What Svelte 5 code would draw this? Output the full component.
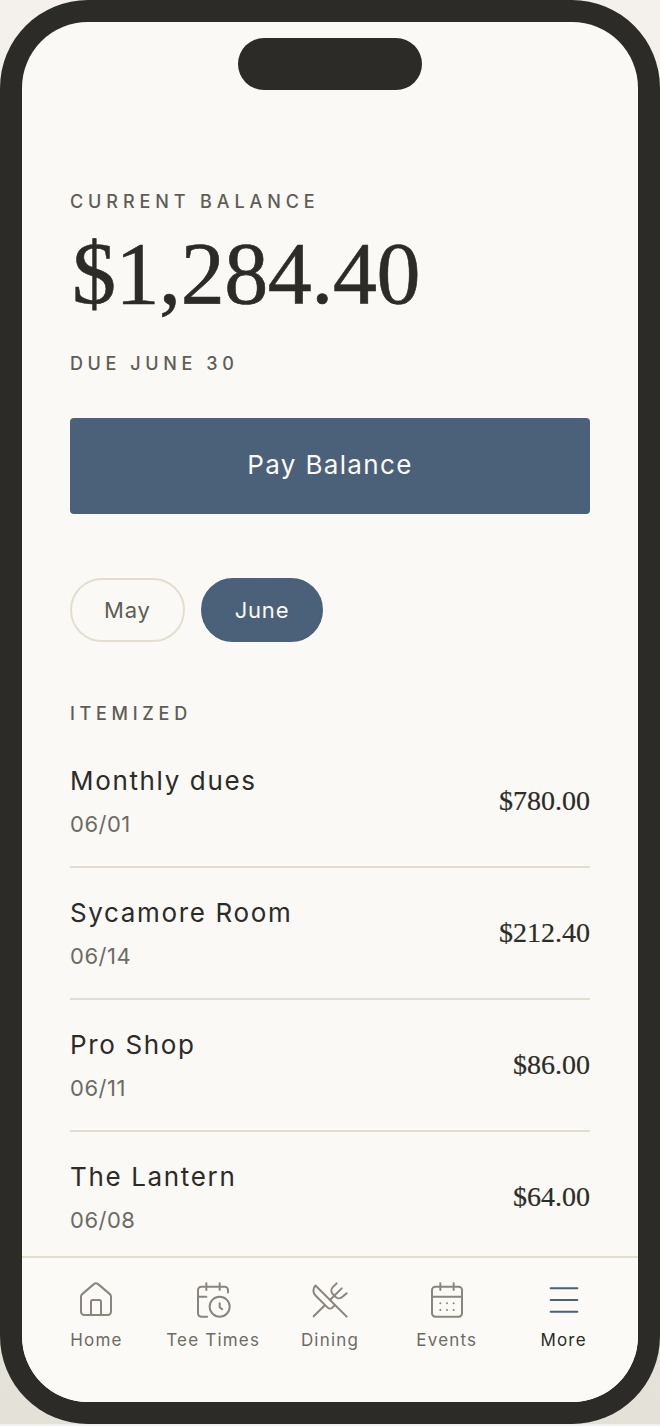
<script>
  const items = [
    { name: "Monthly dues", date: "06/01", amount: "$780.00" },
    { name: "Sycamore Room", date: "06/14", amount: "$212.40" },
    { name: "Pro Shop", date: "06/11", amount: "$86.00" },
    { name: "The Lantern", date: "06/08", amount: "$64.00" },
  ];
  const tabs = ["Home", "Tee Times", "Dining", "Events", "More"];
</script>

<div class="phone">
  <div class="screen">
    <div class="notch"></div>
    <main class="content">
      <div class="label">CURRENT BALANCE</div>
      <div class="balance">$1,284.40</div>
      <div class="due">DUE JUNE 30</div>
      <button class="pay">Pay Balance</button>
      <div class="months">
        <button class="pill">May</button>
        <button class="pill active">June</button>
      </div>
      <div class="itemized">ITEMIZED</div>
      <ul class="list">
        {#each items as item}
          <li class="row">
            <div>
              <div class="name">{item.name}</div>
              <div class="date">{item.date}</div>
            </div>
            <div class="amount">{item.amount}</div>
          </li>
        {/each}
      </ul>
    </main>
    <nav class="tabs">
      {#each tabs as tab, i}
        <div class="tab" class:current={tab === "More"}>
          <svg width="40" height="40" viewBox="0 0 24 24" fill="none" stroke="currentColor" stroke-width="1.2" stroke-linecap="round" stroke-linejoin="round">
            {#if i === 0}
              <path d="M15 21v-8a1 1 0 0 0-1-1h-4a1 1 0 0 0-1 1v8"/>
              <path d="M3 10a2 2 0 0 1 .709-1.528l7-5.999a2 2 0 0 1 2.582 0l7 5.999A2 2 0 0 1 21 10v9a2 2 0 0 1-2 2H5a2 2 0 0 1-2-2z"/>
            {:else if i === 1}
              <path d="M21 7.5V6a2 2 0 0 0-2-2H5a2 2 0 0 0-2 2v14a2 2 0 0 0 2 2h3.5"/>
              <path d="M16 2v4M8 2v4M3 10h5"/>
              <path d="M17.5 17.5 16 16.3V14"/>
              <circle cx="16" cy="16" r="6"/>
            {:else if i === 2}
              <path d="m16 2-2.3 2.3a3 3 0 0 0 0 4.2l1.6 1.6a3 3 0 0 0 4.2 0L22 8"/>
              <path d="M15 15 3.3 3.3a4.2 4.2 0 0 0 0 6l7.3 7.3c.7.7 2 .7 2.8 0L15 15Zm0 0 7 7"/>
              <path d="m2.2 21.8 6.4-6.3"/>
              <path d="m19 5-7 7"/>
            {:else if i === 3}
              <path d="M8 2v4M16 2v4"/>
              <rect x="3" y="4" width="18" height="18" rx="2"/>
              <path d="M3 10h18M8 14h.01M12 14h.01M16 14h.01M8 18h.01M12 18h.01M16 18h.01"/>
            {:else}
              <path d="M4 5h16M4 12h16M4 19h16"/>
            {/if}
          </svg>
          <span>{tab}</span>
        </div>
      {/each}
    </nav>
  </div>
</div>

<style>
  :global(body) {
    margin: 0;
    background: linear-gradient(#f4f1ec, #e4e1d8);
  }

  .phone {
    width: 660px;
    height: 1424px;
    box-sizing: border-box;
    background: #2c2b27;
    border-radius: 88px;
    padding: 22px;
  }

  .screen {
    position: relative;
    display: flex;
    flex-direction: column;
    height: 1380px;
    background: #faf9f5;
    border-radius: 66px;
    overflow: hidden;
    font-family: Inter, "Noto Sans", sans-serif;
    color: #2c2b27;
  }

  .notch {
    position: absolute;
    top: 16px;
    left: 216px;
    width: 184px;
    height: 52px;
    border-radius: 26px;
    background: #2c2b27;
  }

  .content {
    flex: 1;
    min-height: 0;
    overflow: hidden;
    padding: 169px 48px 0;
  }

  .label,
  .due,
  .itemized {
    font-size: 18px;
    font-weight: 500;
    line-height: 22px;
    letter-spacing: 4.9px;
    color: #5f5d56;
  }

  .balance {
    margin: 11px 0 0 2px;
    font-family: "Liberation Serif", serif;
    font-size: 88px;
    line-height: 100px;
    letter-spacing: -0.44px;
    -webkit-text-stroke: 0.6px #2c2b27;
  }

  .due {
    margin-top: 29px;
    letter-spacing: 4.6px;
  }

  .pay {
    display: block;
    width: 100%;
    height: 96px;
    margin-top: 43px;
    padding: 0 0 3px;
    border: 0;
    border-radius: 4px;
    background: #4b6079;
    color: #faf9f5;
    font: 400 26px Inter, "Noto Sans", sans-serif;
    letter-spacing: 1.35px;
  }

  .months {
    display: flex;
    gap: 16px;
    margin-top: 64px;
  }

  .pill {
    height: 64px;
    padding: 0 32px;
    border: 2px solid #e3ded0;
    border-radius: 32px;
    background: transparent;
    color: #5f5d56;
    font: 400 22px Inter, "Noto Sans", sans-serif;
    letter-spacing: 0.8px;
  }

  .pill.active {
    background: #4b6079;
    border-color: #4b6079;
    color: #faf9f5;
  }

  .itemized {
    margin-top: 61px;
    letter-spacing: 4.7px;
  }

  .list {
    list-style: none;
    margin: 11px 0 0;
    padding: 0;
  }

  .row {
    display: flex;
    align-items: center;
    justify-content: space-between;
    box-sizing: border-box;
    height: 132px;
    border-bottom: 2px solid #e3ded0;
  }

  .name {
    font-size: 26px;
    line-height: 34px;
    letter-spacing: 1.65px;
  }

  .date {
    margin-top: 12px;
    font-size: 22px;
    line-height: 28px;
    letter-spacing: 0.5px;
    color: #6d6b64;
  }

  .amount {
    font-family: "Liberation Serif", serif;
    font-size: 28px;
    -webkit-text-stroke: 0.2px #2c2b27;
  }

  .tabs {
    display: grid;
    grid-template-columns: repeat(5, 1fr);
    flex: none;
    height: 146px;
    box-sizing: border-box;
    padding: 22px 16px 0;
    border-top: 2px solid #e3ded0;
    background: #fbfaf7;
  }

  .tab {
    display: flex;
    flex-direction: column;
    align-items: center;
    gap: 9px;
    color: #8a867d;
  }

  .tab svg {
    display: block;
  }

  .tab span {
    font-size: 17px;
    line-height: 22px;
    letter-spacing: 1.2px;
    color: #6d6b64;
  }

  .tab.current {
    color: #4b6079;
  }

  .tab.current span {
    color: #2c2b27;
  }
</style>
